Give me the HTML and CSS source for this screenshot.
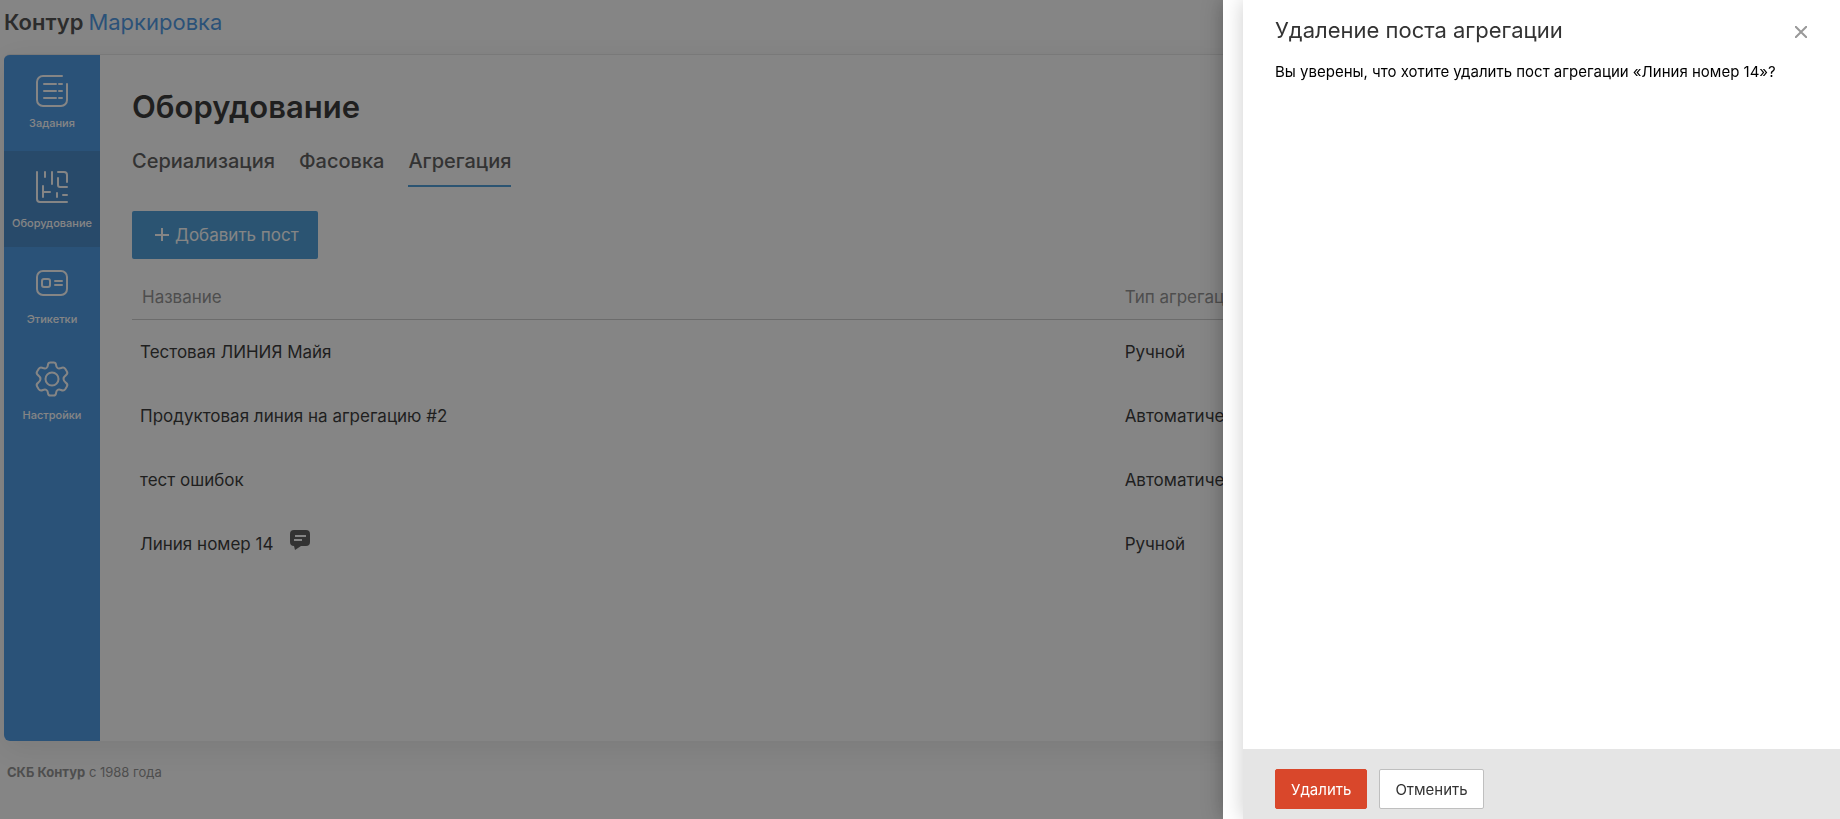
FILE: index.html
```html
<!DOCTYPE html>
<html lang="ru">
  <head>
    <meta charset="utf-8">
    <meta name="viewport" content="width=device-width, initial-scale=1.0">
    <title>Контур.Маркировка</title>
    <link rel="stylesheet" href="styles.css">
  </head>
  <body>
    <header class="header">
      <a class="logo" href="#"><b>Контур</b><span>Маркировка</span></a>
    </header>

    <div class="container">
      <nav class="sidebar">
        <a class="menu-item first" href="#">
          <svg width="32" height="32" viewBox="0 0 32 32">
            <path d="M26 1H7a6 6 0 0 0-6 6v18a6 6 0 0 0 6 6h18a6 6 0 0 0 6-6V9M8 9h12M8 16h12M8 23h12M23 9h3M23 16h3M23 23h3"/>
          </svg>
          <span>Задания</span>
        </a>
        <a class="menu-item active" href="#">
          <svg width="32" height="32" viewBox="0 0 32 32">
            <path d="M1 1v27a3 3 0 0 0 3 3h27M9 1v5M16 1v12M7 15v11M7 21h7M21 22v4M27 24h4M22 1h6a3 3 0 0 1 3 3v7M22 7v7a2 2 0 0 0 2 2h7"/>
          </svg>
          <span>Оборудование</span>
        </a>
        <a class="menu-item" href="#">
          <svg width="32" height="32" viewBox="0 0 32 32">
            <rect x="1" y="4" width="30" height="24" rx="6"/>
            <rect x="6" y="12" width="8" height="8" rx="2"/>
            <path d="M19 14h7M19 18h7"/>
          </svg>
          <span>Этикетки</span>
        </a>
        <a class="menu-item" href="#">
          <svg width="34" height="34" viewBox="-17 -18 34 34">
            <path d="M-1.600-16.500H1.600Q3.800-16.500 4-14.300Q4.200-11.800 5.500-11Q6.900-10.200 9-11Q11.900-12.200 13.200-10.300L14.900-7.500Q16.100-5.500 14-3.900Q11.500-2 11.500 0Q11.500 2 14 3.900Q16.100 5.500 14.900 7.500L13.200 10.300Q11.900 12.200 9 11Q6.900 10.200 5.500 11Q4.200 11.800 4 14.300Q3.800 16.500 1.600 16.500H-1.600Q-3.800 16.500-4 14.300Q-4.200 11.800-5.500 11Q-6.900 10.200-9 11Q-11.900 12.200-13.200 10.300L-14.900 7.500Q-16.100 5.500-14 3.900Q-11.500 2-11.500 0Q-11.500-2-14-3.900Q-16.100-5.500-14.900-7.500L-13.200-10.300Q-11.900-12.200-9-11Q-6.900-10.200-5.500-11Q-4.200-11.800-4-14.300Q-3.800-16.500-1.600-16.500z"/>
            <circle r="6.500"/>
          </svg>
          <span>Настройки</span>
        </a>
      </nav>

      <main class="content">
        <h1>Оборудование</h1>
        <div class="tabs">
          <a class="tab" href="#">Сериализация</a>
          <a class="tab" href="#">Фасовка</a>
          <a class="tab active" href="#">Агрегация</a>
        </div>
        <button class="add-button" type="button">
          <svg width="14" height="14" viewBox="0 0 14 14"><path d="M7 0v13M0 7h14"/></svg>
          Добавить пост
        </button>
        <table class="posts">
          <thead>
            <tr><th>Название</th><th>Тип агрегации</th></tr>
          </thead>
          <tbody>
            <tr><td>Тестовая ЛИНИЯ Майя</td><td>Ручной</td></tr>
            <tr><td>Продуктовая линия на агрегацию #2</td><td>Автоматический</td></tr>
            <tr><td>тест ошибок</td><td>Автоматический</td></tr>
            <tr>
              <td>
                <div class="post-name">
                  Линия номер 14
                  <svg class="comment" width="20" height="20" viewBox="0 0 20 20">
                    <path d="M4 0h12a4 4 0 0 1 4 4v8a4 4 0 0 1-4 4h-5l-6 4-1-4a4 4 0 0 1-4-4V4a4 4 0 0 1 4-4z"/>
                    <path class="lines" d="M5 6h11M4 10h8"/>
                  </svg>
                </div>
              </td>
              <td>Ручной</td>
            </tr>
          </tbody>
        </table>
      </main>
    </div>

    <footer class="footer"><b>СКБ Контур</b> с 1988 года</footer>

    <div class="overlay">
      <div class="side-page" role="dialog" aria-labelledby="side-title">
        <div class="side-panel">
          <div class="side-header">
            <h2 id="side-title">Удаление поста агрегации</h2>
            <button class="close" type="button" aria-label="Закрыть">
              <svg width="12" height="12" viewBox="0 0 12 12"><path d="M0 0l12 12M12 0L0 12"/></svg>
            </button>
          </div>
          <p class="side-body">Вы уверены, что хотите удалить пост агрегации «Линия номер 14»?</p>
          <div class="side-footer">
            <button class="button danger" type="button">Удалить</button>
            <button class="button" type="button">Отменить</button>
          </div>
        </div>
      </div>
    </div>
  </body>
</html>
```
FILE: styles.css
```css
* {
  box-sizing: border-box;
}

body {
  font-family: Inter, Roboto, sans-serif;
  font-size: 17px;
  background-color: #fff;
  color: #000;
  margin: 0;
  min-height: 100vh;
  display: flex;
  flex-direction: column;
  overflow: hidden;
}

a {
  color: inherit;
  text-decoration: none;
}

button {
  font-family: inherit;
  cursor: pointer;
}

svg {
  fill: none;
  stroke: currentColor;
  stroke-width: 2;
  flex-shrink: 0;
}

.header {
  height: 54px;
  padding: 8px 4px;
}

.logo {
  display: flex;
  gap: 5px;
  font-size: 22px;
  line-height: 28px;
}

.logo b {
  font-weight: 600;
  color: #222;
}

.logo span {
  color: #1d80df;
}

.container {
  flex: 1;
  display: flex;
  margin-left: 4px;
  border-top: 1px solid #e0e0e0;
  border-radius: 6px 0 0 6px;
  overflow: hidden;
  box-shadow: 0 8px 32px rgba(0, 0, 0, 0.1);
}

.sidebar {
  width: 96px;
  flex-shrink: 0;
  background-color: #1d80df;
  color: #fff;
}

.sidebar svg {
  overflow: visible;
  stroke-linecap: round;
  stroke-linejoin: round;
}

.menu-item {
  height: 96px;
  padding-bottom: 16px;
  display: flex;
  flex-direction: column;
  align-items: center;
  justify-content: flex-end;
  gap: 12px;
  font-size: 11px;
  line-height: 16px;
  font-weight: 500;
}

.menu-item.first {
  padding-bottom: 20px;
  gap: 8px;
}

.menu-item.active {
  background-color: #186bbc;
}

.content {
  flex: 1;
  padding: 32px 0 0 32px;
}

h1 {
  margin: 0;
  font-size: 31px;
  line-height: 40px;
  font-weight: 600;
}

.tabs {
  display: flex;
  gap: 24px;
  margin-top: 16px;
}

.tab {
  padding: 4px 0 10px;
  font-size: 20px;
  line-height: 28px;
  font-weight: 500;
  color: #333;
  border-bottom: 2px solid transparent;
}

.tab.active {
  border-color: #1e86d0;
}

.add-button {
  display: flex;
  align-items: center;
  gap: 6px;
  height: 48px;
  margin-top: 24px;
  padding: 0 19px 0 23px;
  border: none;
  border-radius: 2px;
  background-color: #1e86d0;
  color: #fff;
  font-size: 17px;
}

.posts {
  width: 100%;
  margin-top: 16px;
  border-collapse: collapse;
  table-layout: fixed;
}

.posts th {
  height: 44px;
  padding: 0 10px;
  border-bottom: 1px solid #c0c0c0;
  color: #757575;
  font-weight: 400;
  text-align: left;
}

.posts td {
  height: 64px;
  padding: 2px 8px 0;
}

.posts th:first-child {
  width: 58%;
}

.posts th + th,
.posts td + td {
  padding-left: 2px;
}

.post-name {
  display: flex;
  align-items: center;
  gap: 17px;
}

.comment {
  margin-bottom: 8px;
  fill: #333;
  stroke: none;
}

.comment .lines {
  stroke: #fff;
}

.footer {
  height: 78px;
  padding: 20px 7px;
  color: #757575;
  font-size: 13px;
  line-height: 22px;
}

/* dimmed layer with the side page */
.overlay {
  position: fixed;
  inset: 0;
  display: flex;
  justify-content: flex-end;
  background-color: rgba(51, 51, 51, 0.6);
}

.side-page {
  width: 617px;
  max-width: 100%;
  padding-left: 20px;
  background-color: #fff;
  box-shadow: 0 0 20px rgba(0, 0, 0, 0.3);
}

.side-panel {
  height: 100%;
  display: flex;
  flex-direction: column;
  background-color: #fff;
  box-shadow: 0 0 20px rgba(0, 0, 0, 0.2);
}

.side-header {
  display: flex;
  justify-content: space-between;
  align-items: center;
  padding: 14px 33px 0 32px;
}

h2 {
  margin: 0;
  font-size: 22px;
  line-height: 32px;
  font-weight: 400;
  color: #333;
}

.close {
  display: flex;
  padding: 4px 0 0;
  border: none;
  background: none;
  color: #999;
}

.side-body {
  flex: 1;
  margin: 0;
  padding: 16px 32px;
  font-size: 15px;
  line-height: 20px;
}

.side-footer {
  display: flex;
  gap: 12px;
  padding: 20px 32px 10px;
  background-color: #e5e5e5;
}

.button {
  height: 40px;
  padding: 0 15px;
  border: 1px solid #bfbfbf;
  border-radius: 2px;
  background-color: #fff;
  color: #333;
  font-size: 15px;
}

.button.danger {
  border-color: #d9472b;
  background-color: #d9472b;
  color: #fff;
}
```
